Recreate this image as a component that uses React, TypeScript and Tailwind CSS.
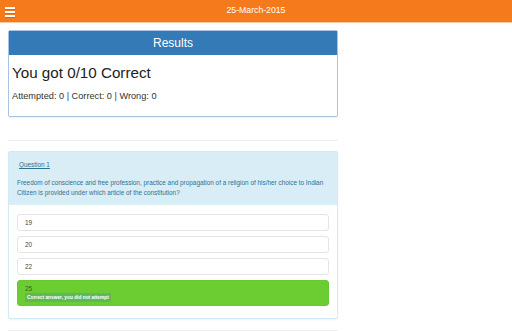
const options = ["19", "20", "22"];

export default function App() {
  return (
    <div className="min-h-[331px] bg-white font-['Liberation_Sans',Arial,sans-serif] text-[#333]">
      <header className="relative flex h-[22px] items-center justify-center bg-[#f47a1b]">
        <div className="absolute left-[5px] top-[7px] flex w-[10px] flex-col gap-[2.5px]">
          <span className="h-[1.5px] bg-white shadow-[0_0.5px_0_rgba(0,0,0,0.25)]" />
          <span className="h-[1.5px] bg-white shadow-[0_0.5px_0_rgba(0,0,0,0.25)]" />
          <span className="h-[1.5px] bg-white shadow-[0_0.5px_0_rgba(0,0,0,0.25)]" />
        </div>
        <span className="text-[8.7px] text-white">25-March-2015</span>
      </header>
      <div className="h-px bg-[#fbc9a4]" />

      <div className="ml-2 w-[330px]">
        <div className="mt-[7px] rounded-[2px] border border-[#a9c4e2] shadow-[0_1px_1px_rgba(0,0,0,0.06)]">
          <div className="flex h-[24px] items-center justify-center bg-[#337ab7] text-[12px] text-white">
            Results
          </div>
          <div className="px-[3px] pb-[13px] pt-[9px]">
            <p className="text-[15.2px] leading-[17px] text-[#222]">You got 0/10 Correct</p>
            <p className="mt-[9px] text-[9.2px] leading-[13px] text-[#333]">Attempted: 0 | Correct: 0 | Wrong: 0</p>
          </div>
        </div>

        <div className="mt-[23px] h-px bg-[#eeeeee]" />

        <div className="mt-[10px] rounded-[2px] border border-[#d3e9f4] bg-white shadow-[0_1px_2px_rgba(0,0,0,0.05)]">
          <div className="bg-[#d9edf7] px-[8px] pb-[8px] pt-[8px] text-[6.4px] leading-[9px] text-[#31708f]">
            <a className="ml-[2px] block w-fit text-[6.4px] leading-[9px] underline">Question 1</a>
            <p className="mt-[9px] text-[6.4px] leading-[9.7px]">
              Freedom of conscience and free profession, practice and propagation of a religion of his/her choice to Indian Citizen is provided under which article of the constitution?
            </p>
          </div>
          <div className="flex flex-col gap-[5px] px-[8px] pb-[12px] pt-[9px] text-[6.4px]">
            {options.map((opt) => (
              <div
                key={opt}
                className="flex h-[17px] items-center rounded-[3px] border border-[#e4e4e4] px-[7px] text-[6.4px] text-[#444]"
              >
                {opt}
              </div>
            ))}
            <div className="h-[26px] rounded-[3px] border border-[#66c72e] bg-[#6bcd31] px-[7px] pt-[4px] text-[6.4px] leading-[7px]">
              <p className="text-[6.4px] leading-[7px] text-[#3a5e22]">25</p>
              <span className="mt-[1px] block w-fit bg-[#5eb85a] px-[2px] text-[4.8px] font-bold leading-[9px] text-white">
                Correct answer, you did not attempt
              </span>
            </div>
          </div>
        </div>

        <div className="mt-[11px] h-px bg-[#eeeeee]" />
      </div>
    </div>
  );
}
